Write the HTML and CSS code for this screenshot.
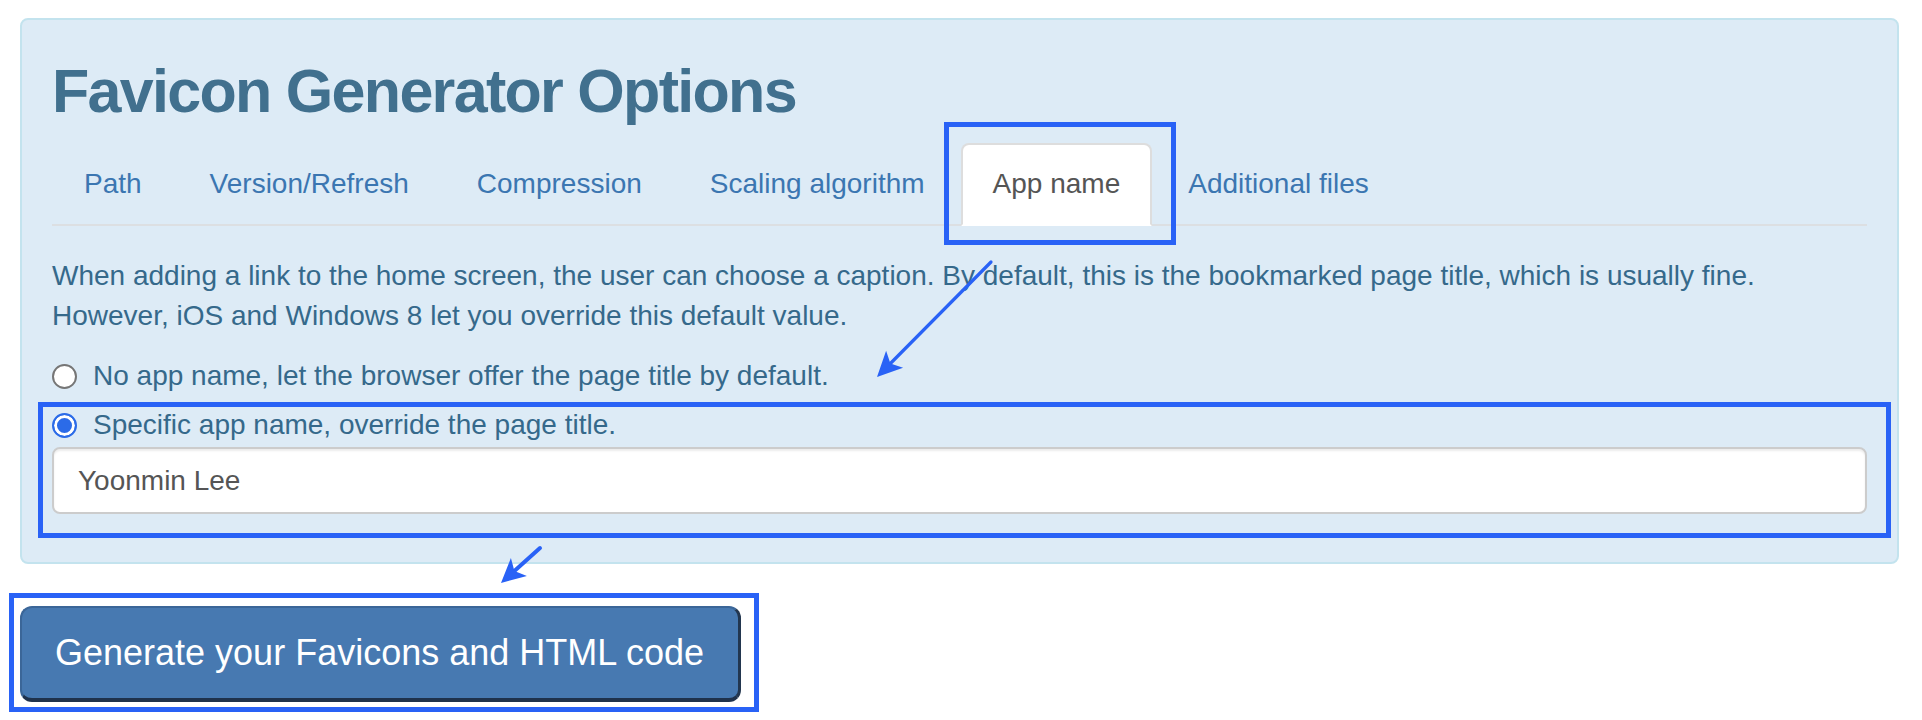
FILE: index.html
```html
<!DOCTYPE html>
<html lang="en">
<head>
<meta charset="utf-8">
<title>Favicon Generator Options</title>
<link rel="stylesheet" href="styles.css">
</head>
<body>
<div class="page">
  <section class="panel">
    <h2 class="title">Favicon Generator Options</h2>
    <ul class="tabs">
      <li class="tab"><a href="#">Path</a></li>
      <li class="tab"><a href="#">Version/Refresh</a></li>
      <li class="tab"><a href="#">Compression</a></li>
      <li class="tab"><a href="#">Scaling algorithm</a></li>
      <li class="tab active"><a href="#">App name</a></li>
      <li class="tab"><a href="#">Additional files</a></li>
    </ul>
    <div class="tab-content">
      <p class="intro">When adding a link to the home screen, the user can choose a caption. By default, this is the bookmarked page title, which is usually fine.<br>However, iOS and Windows 8 let you override this default value.</p>
      <label class="radio first"><input type="radio" name="app"><span>No app name, let the browser offer the page title by default.</span></label>
      <label class="radio"><input type="radio" name="app" checked><span>Specific app name, override the page title.</span></label>
      <input class="text-input" type="text" value="Yoonmin Lee">
    </div>
  </section>
  <button class="generate" type="button">Generate your Favicons and HTML code</button>
</div>
<svg class="annotations" width="1922" height="720" viewBox="0 0 1922 720" aria-hidden="true">
  <g fill="none" stroke="#2962f6" stroke-width="5">
    <rect x="946.5" y="124.5" width="227" height="118"/>
    <rect x="40.5" y="404.5" width="1848" height="131"/>
    <rect x="11.5" y="595.5" width="745" height="114"/>
  </g>
  <g stroke="#2962f6" stroke-linecap="round">
    <line x1="991" y1="262" x2="890.4" y2="363.5" stroke-width="3.2"/>
    <line x1="540" y1="548" x2="514.4" y2="571" stroke-width="4"/>
  </g>
  <g fill="#2962f6">
    <polygon points="877,377 886.1,350.8 890.4,363.5 903.1,367.7"/>
    <polygon points="501,583 510.9,558.1 514.4,571 526.9,575.9"/>
  </g>
</svg>
</body>
</html>
```
FILE: styles.css
```css
html, body {
  margin: 0;
  padding: 0;
  background: #ffffff;
}

body {
  position: relative;
  height: 720px;
  font-family: "Liberation Sans", Arial, Helvetica, sans-serif;
  font-size: 28px;
  line-height: 40px;
  color: #35698b;
  overflow: hidden;
}

.page {
  padding: 18px 23px 0 20px;
}

.panel {
  background: #ddebf6;
  border: 2px solid #c3e3ee;
  border-radius: 8px;
  padding: 30px 30px 30px 30px;
}

.title {
  margin: 8px 0 18px;
  font-size: 61px;
  line-height: 67px;
  font-weight: bold;
  letter-spacing: -1.7px;
  color: #41708e;
}

.tabs {
  display: flex;
  list-style: none;
  margin: 0;
  padding: 0;
  border-bottom: 2px solid #dcdfe2;
}

.tab {
  margin: 0 4px -2px 0;
}

.tab a {
  display: block;
  padding: 19px 30px 20px;
  line-height: 40px;
  font-size: 28px;
  color: #3b76b1;
  text-decoration: none;
  border: 2px solid transparent;
  border-radius: 8px 8px 0 0;
}

.tab.active a {
  background: #ffffff;
  color: #555555;
  border-color: #dddddd #dddddd transparent;
}

.tab-content {
  padding-top: 30px;
}

.intro {
  margin: 0 0 20px;
  line-height: 40px;
}

.radio {
  display: flex;
  align-items: center;
  height: 40px;
  cursor: pointer;
}

.radio.first {
  margin-bottom: 9px;
}

.radio input {
  appearance: none;
  -webkit-appearance: none;
  box-sizing: border-box;
  width: 25px;
  height: 25px;
  margin: 0 16px 0 0;
  border: 2px solid #767676;
  border-radius: 50%;
  background: #ffffff;
  flex: none;
}

.radio input:checked {
  border-color: #2b6be8;
  background: #2b6be8;
  box-shadow: inset 0 0 0 3px #ffffff;
}

.text-input {
  display: block;
  box-sizing: border-box;
  width: 100%;
  height: 67px;
  margin: 2px 0 18px;
  padding: 0 24px;
  font-family: "Liberation Sans", Arial, Helvetica, sans-serif;
  font-size: 28px;
  color: #555555;
  background: #ffffff;
  border: 2px solid #cccccc;
  border-radius: 8px;
  box-shadow: inset 0 2px 2px rgba(0, 0, 0, 0.075);
  outline: none;
}

.generate {
  display: inline-block;
  margin-top: 42px;
  padding: 21px 34px 21px 33px;
  font-family: "Liberation Sans", Arial, Helvetica, sans-serif;
  font-size: 36px;
  line-height: 48px;
  color: #ffffff;
  background: #4779b1;
  border-style: solid;
  border-width: 2px 3px 4px 2px;
  border-color: #3b6698 #22364f #1f324c #3b6698;
  border-radius: 12px;
  cursor: pointer;
}

.annotations {
  position: absolute;
  top: 0;
  left: 0;
  pointer-events: none;
}
```
